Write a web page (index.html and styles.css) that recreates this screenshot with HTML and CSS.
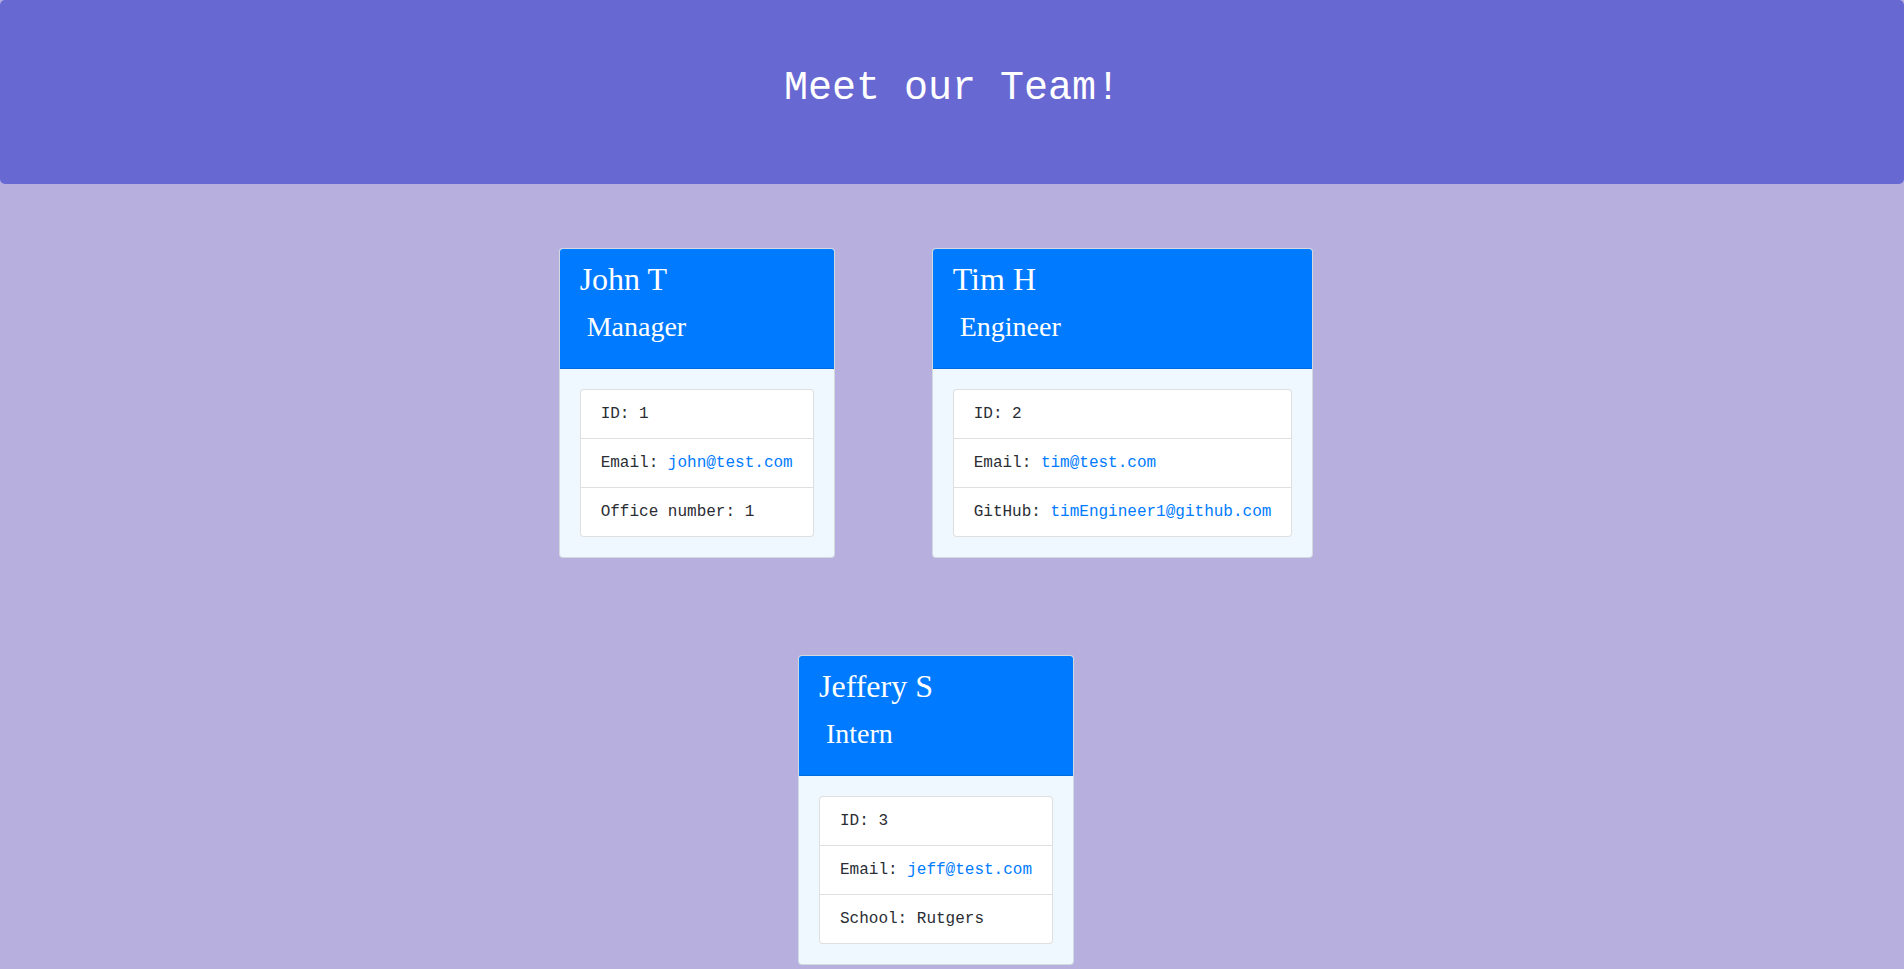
FILE: index.html
```html
<!DOCTYPE html>
<html lang="en">
<head>
<meta charset="UTF-8">
<title>My Team</title>
<link rel="stylesheet" href="styles.css">
</head>
<body>
<header class="jumbotron">
  <h1 class="jumbotron-title">Meet our Team!</h1>
</header>
<main class="team">
  <div class="team-row">
    <div class="card">
      <div class="card-header">
        <h2 class="card-name">John T</h2>
        <h3 class="card-role"> Manager</h3>
      </div>
      <div class="card-body">
        <ul class="list-group">
          <li class="list-item">ID: 1</li>
          <li class="list-item">Email: <a class="link" href="#">john@test.com</a></li>
          <li class="list-item">Office number: 1</li>
        </ul>
      </div>
    </div>
    <div class="card">
      <div class="card-header">
        <h2 class="card-name">Tim H</h2>
        <h3 class="card-role"> Engineer</h3>
      </div>
      <div class="card-body">
        <ul class="list-group">
          <li class="list-item">ID: 2</li>
          <li class="list-item">Email: <a class="link" href="#">tim@test.com</a></li>
          <li class="list-item">GitHub: <a class="link" href="#">timEngineer1@github.com</a></li>
        </ul>
      </div>
    </div>
  </div>
  <div class="team-row">
    <div class="card">
      <div class="card-header">
        <h2 class="card-name">Jeffery S</h2>
        <h3 class="card-role"> Intern</h3>
      </div>
      <div class="card-body">
        <ul class="list-group">
          <li class="list-item">ID: 3</li>
          <li class="list-item">Email: <a class="link" href="#">jeff@test.com</a></li>
          <li class="list-item">School: Rutgers</li>
        </ul>
      </div>
    </div>
  </div>
</main>
</body>
</html>
```
FILE: styles.css
```css
* {
  box-sizing: border-box;
}

html, body {
  margin: 0;
  padding: 0;
}

body {
  background: #b7b0df;
  font-family: "Liberation Mono", "Courier New", monospace;
  font-size: 16px;
  line-height: 1.5;
  color: #2a2d33;
}

.jumbotron {
  background: #6868d3;
  padding: 64px 32px;
  border-radius: 5px;
  text-align: center;
}

.jumbotron-title {
  margin: 0 0 8px;
  font-size: 40px;
  line-height: 1.2;
  font-weight: normal;
  color: #ffffff;
  position: relative;
  top: 1px;
}

.team {
  display: flex;
  flex-direction: column;
  align-items: center;
  gap: 97px;
  padding: 64px 32px 40px 0;
}

.team-row {
  display: flex;
  justify-content: center;
  gap: 97px;
}

.card {
  display: flex;
  flex-direction: column;
  border: 1px solid rgba(0, 0, 0, 0.125);
  border-radius: 4px;
  overflow: hidden;
  background: #f0f8ff;
}

.card-header {
  background: #007bff;
  color: #ffffff;
  padding: 11px 20px 12px;
  border-bottom: 1px solid rgba(0, 0, 0, 0.125);
  font-family: "Liberation Serif", "Times New Roman", serif;
}

.card-name {
  margin: 0 0 12px;
  font-size: 32px;
  line-height: 1.2;
  font-weight: normal;
}

.card-role {
  margin: 0 0 12px;
  font-size: 28px;
  line-height: 1.2;
  font-weight: normal;
  white-space: pre;
}

.card-body {
  padding: 20px;
}

.list-group {
  list-style: none;
  margin: 0;
  padding: 0;
  background: #ffffff;
  border: 1px solid rgba(0, 0, 0, 0.125);
  border-radius: 4px;
}

.list-item {
  padding: 12px 20px;
  line-height: 24px;
  white-space: nowrap;
}

.list-item + .list-item {
  border-top: 1px solid rgba(0, 0, 0, 0.125);
}

.link {
  color: #007bff;
  text-decoration: none;
}
```
